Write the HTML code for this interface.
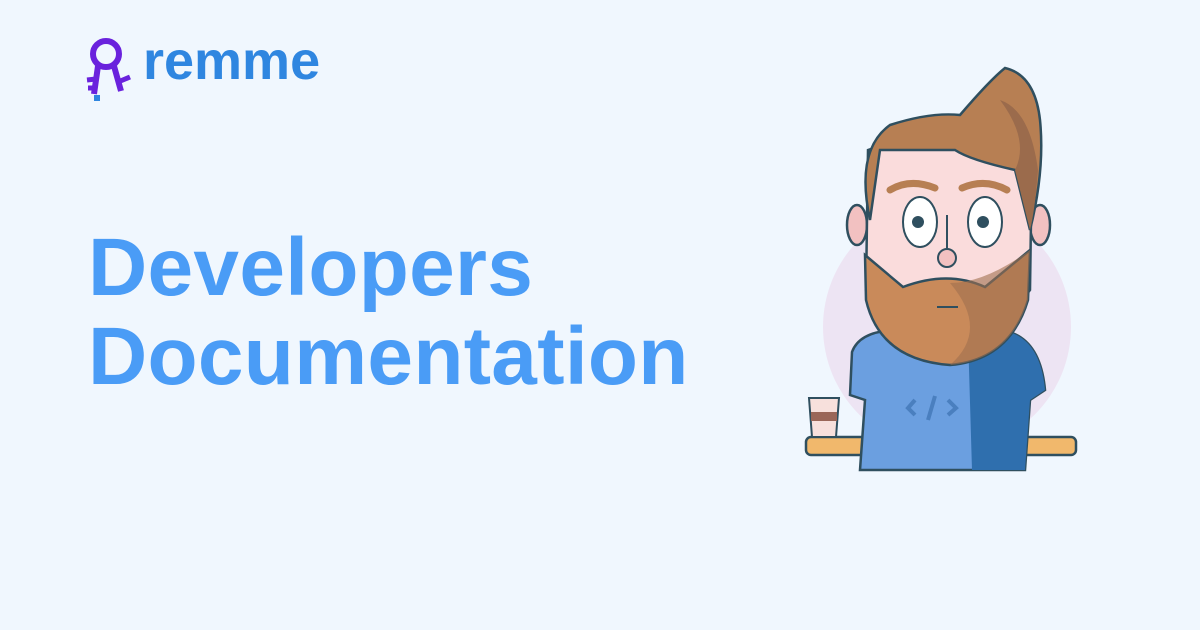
<!DOCTYPE html>
<html><head><meta charset="utf-8"><style>
body{margin:0;width:1200px;height:630px;background:#f0f7fe;overflow:hidden;position:relative;font-family:"Liberation Sans",sans-serif}
.t{position:absolute;left:88px;font-weight:bold;color:#4a9cf6;font-size:82px;line-height:1;letter-spacing:0.3px}
.logo{position:absolute;left:143px;top:34px;font-weight:bold;color:#2f86e0;font-size:54px;line-height:1}
</style></head><body>
<svg style="position:absolute;left:0;top:0" width="140" height="110">
<circle cx="106" cy="54" r="13" fill="none" stroke="#6a22dd" stroke-width="6"/>
<path d="M98 66 L94 94 M114 66 L121 91" stroke="#6a22dd" stroke-width="6" fill="none"/>
<path d="M87 80 L96 79 M88 88 L95 88 M118 82 L130 77" stroke="#6a22dd" stroke-width="5"/>
<rect x="94" y="95" width="6" height="6" fill="#2f86e0"/>
</svg>
<div class="logo">remme</div>
<div class="t" style="top:227px">Developers</div>
<div class="t" style="top:316px">Documentation</div>
<svg style="position:absolute;left:0;top:0" width="1200" height="630">
<circle cx="947" cy="327" r="124" fill="#ede4f3"/>
<rect x="806" y="437" width="270" height="18" rx="5" fill="#f1b86c" stroke="#2f4f5f" stroke-width="2.5"/>
<path d="M809 398 L839 398 L836 437 L812 437 Z" fill="#f7e0dc" stroke="#2f4f5f" stroke-width="2"/>
<rect x="811" y="412" width="26" height="9" fill="#9a6658"/>
<ellipse cx="857" cy="225" rx="10" ry="20" fill="#f2c1c1" stroke="#2f4f5f" stroke-width="2.5"/>
<ellipse cx="1040" cy="225" rx="10" ry="20" fill="#f2c1c1" stroke="#2f4f5f" stroke-width="2.5"/>
<path d="M852 352 Q860 330 900 330 L1000 330 Q1040 335 1045 390 L1030 400 L1025 470 L860 470 L865 400 L850 395 Z" fill="#6b9fe0" stroke="#2f4f5f" stroke-width="2.5"/>
<path d="M968 335 L1000 330 Q1040 335 1045 390 L1030 400 L1025 470 L972 470 Z" fill="#2f6fae"/>
<path d="M915 400 L908 408 L915 415 M935 396 L928 420 M948 400 L956 408 L948 415" stroke="#4a7fbf" stroke-width="4" fill="none"/>
<path d="M868 150 Q950 120 1032 150 L1030 290 Q1000 330 948 332 Q895 330 866 290 Z" fill="#fadcdc" stroke="#2f4f5f" stroke-width="2.5"/>
<path d="M865 255 L903 287 Q948 270 985 287 L1030 250 L1028 300 Q1010 360 950 365 Q880 360 866 300 Z" fill="#c98a5a" stroke="#2f4f5f" stroke-width="2.5"/>
<path d="M950 283 Q985 283 1030 250 L1028 300 Q1010 360 950 365 Q990 330 950 283 Z" fill="#a0704e" opacity=".6"/>
<path d="M870 220 Q855 150 890 125 Q930 112 960 115 Q990 80 1005 68 Q1035 75 1040 120 Q1045 170 1030 230 L1015 170 Q970 160 955 150 Q920 150 880 150 Z" fill="#b77f53" stroke="#2f4f5f" stroke-width="2.5"/>
<path d="M1015 170 Q1030 140 1000 100 Q1030 110 1038 170 Q1035 210 1030 230 Z" fill="#9b6b4c"/>
<path d="M890 190 Q910 178 935 188 M962 188 Q985 178 1007 190" stroke="#b77f53" stroke-width="7" stroke-linecap="round" fill="none"/>
<ellipse cx="920" cy="222" rx="17" ry="25" fill="#fff" stroke="#2f4f5f" stroke-width="2"/>
<ellipse cx="985" cy="222" rx="17" ry="25" fill="#fff" stroke="#2f4f5f" stroke-width="2"/>
<circle cx="918" cy="222" r="6" fill="#2f4f5f"/>
<circle cx="983" cy="222" r="6" fill="#2f4f5f"/>
<path d="M947 215 L947 252" stroke="#2f4f5f" stroke-width="2"/>
<circle cx="947" cy="258" r="9" fill="#f2c1c1" stroke="#2f4f5f" stroke-width="2"/>
<path d="M937 307 L958 307" stroke="#2f4f5f" stroke-width="2"/>
</svg>
</body></html>
